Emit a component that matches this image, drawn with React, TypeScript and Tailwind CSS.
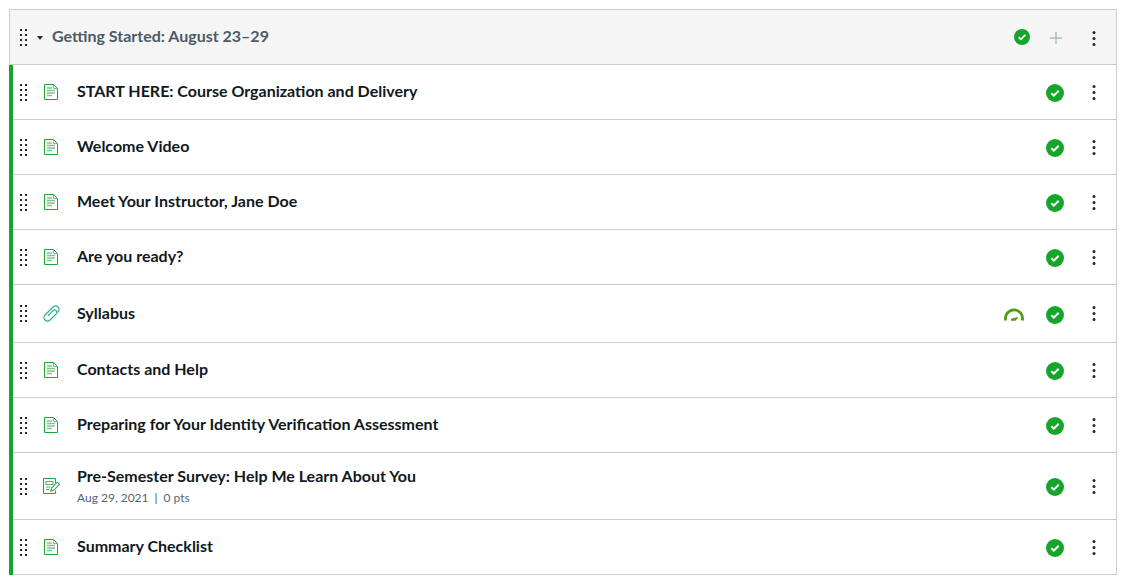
import React, { FC } from "react";

type ModuleItem = {
  title: string;
  kind: "page" | "attachment" | "quiz";
  height: string;
  meta?: string;
  gauge?: boolean;
};

const items: ModuleItem[] = [
  { title: "START HERE: Course Organization and Delivery", kind: "page", height: "h-[55px]" },
  { title: "Welcome Video", kind: "page", height: "h-[55px]" },
  { title: "Meet Your Instructor, Jane Doe", kind: "page", height: "h-[55px]" },
  { title: "Are you ready?", kind: "page", height: "h-[55px]" },
  { title: "Syllabus", kind: "attachment", height: "h-[58px]", gauge: true },
  { title: "Contacts and Help", kind: "page", height: "h-[55px]" },
  { title: "Preparing for Your Identity Verification Assessment", kind: "page", height: "h-[55px]" },
  { title: "Pre-Semester Survey: Help Me Learn About You", kind: "quiz", height: "h-[67px]", meta: "Aug 29, 2021" },
  { title: "Summary Checklist", kind: "page", height: "h-[55px]" },
];

const DragHandle: FC = () => (
  <svg width="7" height="17" viewBox="0 0 7 17" fill="#1f2933" className="shrink-0">
    {[0, 5, 10, 15].map((y) => (
      <g key={y}>
        <rect x="0" y={y} width="2" height="2" />
        <rect x="5" y={y} width="2" height="2" />
      </g>
    ))}
  </svg>
);

const PageIcon: FC = () => (
  <svg width="14" height="16" viewBox="0 0 14 16" fill="none" className="shrink-0">
    <path d="M.5.500h9l4 4v11H.5z" stroke="#1fa62f" strokeWidth="1" fill="#fff" />
    <path d="M9.500.500v4h4" stroke="#6cc2a0" strokeWidth="1" />
    <path d="M3 4h5M3 6.500h8M3 9h8M3 11.500h5" stroke="#7fc48a" strokeWidth="1.500" />
  </svg>
);

const AttachmentIcon: FC = () => (
  <svg width="17" height="17" viewBox="0 0 17 17" fill="none" className="shrink-0">
    <path
      d="M15 7A3.500 3.500 0 0 0 10 2L2 10A3.500 3.500 0 0 0 7 15L13.200 8.800A2.200 2.200 0 0 0 10 5.700L5.200 10.500"
      stroke="#35ad8c"
      strokeWidth="1.200"
      strokeLinecap="round"
    />
  </svg>
);

const QuizIcon: FC = () => (
  <svg width="17" height="16" viewBox="0 0 17 16" fill="none" className="shrink-0">
    <path d="M12.500 5V.5H.5v15h12v-3" stroke="#1fa62f" strokeWidth="1" />
    <path d="M3 3.500h7v3H3zM3 9h4M3 11.500h3" stroke="#4fb85c" strokeWidth="1.100" />
    <path d="M7.800 13.200l.9-3.300 5.600-5.700 2.200 2.200-5.600 5.700z" stroke="#2fa67a" strokeWidth="1.100" fill="#fff" />
  </svg>
);

const CheckBadge: FC<{ size: number }> = ({ size }) => (
  <svg width={size} height={size} viewBox="0 0 18 18" className="shrink-0">
    <circle cx="9" cy="9" r="9" fill="#16a52b" />
    <path d="M5.300 9.300l2.500 2.300 4.900-4.900" stroke="#fff" strokeWidth="2" fill="none" />
  </svg>
);

const GaugeIcon: FC = () => (
  <svg width="20" height="13" viewBox="0 0 20 13" fill="none" className="shrink-0">
    <path d="M1.700 12.500A8.550 8.550 0 1 1 18.300 12.500" stroke="#4f9e0f" strokeWidth="2.800" />
    <path d="M7 10.800l7.500-1.800-3 3.800H7z" fill="#4f9e0f" />
  </svg>
);

const KebabMenu: FC = () => (
  <svg width="4" height="15" viewBox="0 0 4 15" fill="#1f2933" className="shrink-0">
    <circle cx="2" cy="1.500" r="1.500" />
    <circle cx="2" cy="7.500" r="1.500" />
    <circle cx="2" cy="13.500" r="1.500" />
  </svg>
);

const kindIcon = (kind: ModuleItem["kind"]) => {
  if (kind === "attachment") return <AttachmentIcon />;
  if (kind === "quiz") return <QuizIcon />;
  return <PageIcon />;
};

const ModuleRow: FC<{ item: ModuleItem }> = ({ item }) => (
  <div className={`flex items-center border-r border-b border-[#c7cdd1] bg-white ${item.height}`}>
    <div className="w-[24px] pl-[7px]">
      <DragHandle />
    </div>
    <div className="w-[40px] pl-[5px]">
      <div className="flex w-[18px] justify-center">{kindIcon(item.kind)}</div>
    </div>
    <div className="flex min-w-0 flex-1 flex-col">
      <span className="-mt-[2px] text-[16px] leading-[22px] font-bold text-[#101820]">{item.title}</span>
      {item.meta && (
        <span className="mt-[3px] text-[12px] leading-[16px] text-[#556572]">
          {item.meta}
          <span className="mx-[6px] text-[#4a4a6a]">|</span>0 pts
        </span>
      )}
    </div>
    {item.gauge && (
      <div className="mt-[2px] mr-[22px]">
        <GaugeIcon />
      </div>
    )}
    <div className="mt-[2px]">
      <CheckBadge size={18} />
    </div>
    <div className="flex w-[52px] justify-center pl-[8px]">
      <KebabMenu />
    </div>
  </div>
);

export default function App() {
  return (
    <div className="h-[584px] w-[1124px] overflow-hidden bg-white pt-[9px] pl-[9px] font-['Lato',sans-serif]">
      <div className="w-[1108px]">
        <div className="flex h-[56px] items-center border border-[#c7cdd1] bg-[#f5f5f5]">
          <div className="ml-[10px]">
            <DragHandle />
          </div>
          <span className="mt-[1px] ml-[10px] h-0 w-0 border-x-[3.500px] border-t-[4px] border-x-transparent border-t-[#1f2933]" />
          <span className="-mt-[2px] ml-[9px] flex-1 text-[16px] leading-[22px] font-bold text-[#4b5a66]">
            Getting Started: August 23–29
          </span>
          <CheckBadge size={16} />
          <svg width="12" height="12" viewBox="0 0 12 12" className="mt-[2px] ml-[20px] shrink-0" stroke="#a9bccb" strokeWidth="1.400">
            <path d="M6 0v12M0 6h12" />
          </svg>
          <div className="mt-[2px] flex w-[54px] justify-center pl-[10px]">
            <KebabMenu />
          </div>
        </div>
        <div className="border-l-4 border-[#16a52b]">
          {items.map((item) => (
            <ModuleRow key={item.title} item={item} />
          ))}
        </div>
      </div>
    </div>
  );
}
